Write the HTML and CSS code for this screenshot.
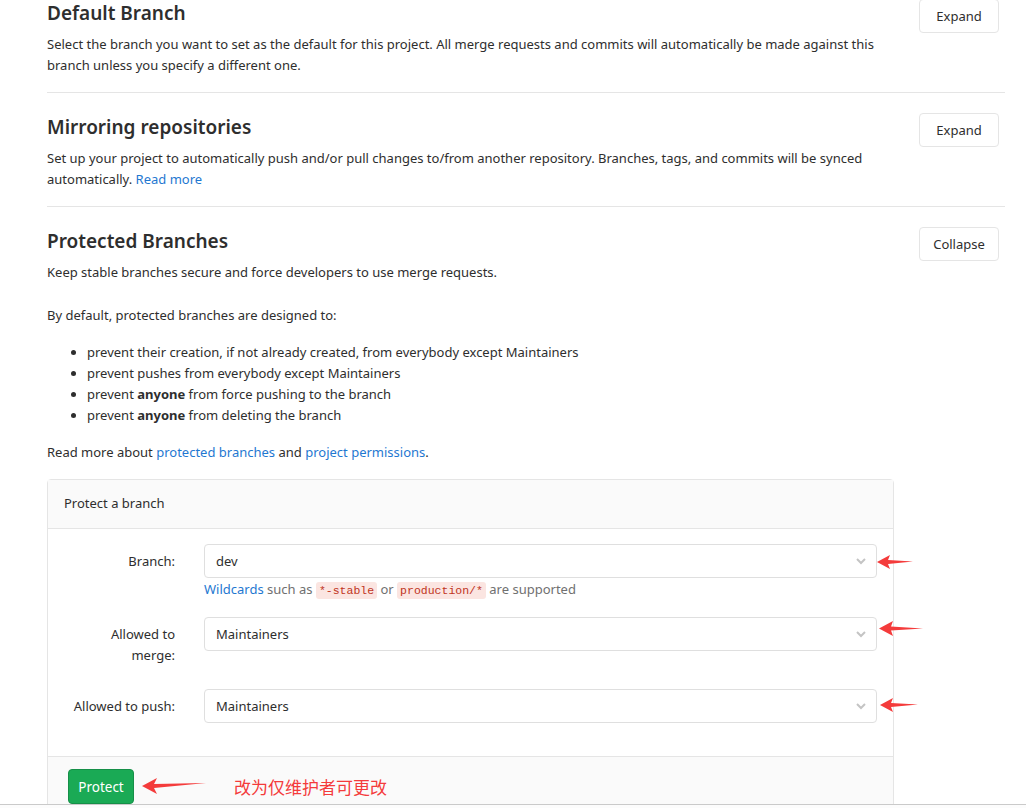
FILE: index.html
```html
<!DOCTYPE html>
<html lang="en">
<head>
<meta charset="utf-8">
<title>Repository Settings</title>
<link rel="stylesheet" href="styles.css">
</head>
<body>
<div class="page">
  <section class="settings-section">
    <h4 class="section-title">Default Branch</h4>
    <button class="btn">Expand</button>
    <p class="section-desc">Select the branch you want to set as the default for this project. All merge requests and commits will automatically be made against this branch unless you specify a different one.</p>
  </section>

  <section class="settings-section">
    <h4 class="section-title">Mirroring repositories</h4>
    <button class="btn">Expand</button>
    <p class="section-desc">Set up your project to automatically push and/or pull changes to/from another repository. Branches, tags, and commits will be synced automatically. <a href="#">Read more</a></p>
  </section>

  <section class="settings-section last">
    <h4 class="section-title">Protected Branches</h4>
    <button class="btn">Collapse</button>
    <p class="section-desc">Keep stable branches secure and force developers to use merge requests.</p>
    <div class="section-content">
      <p class="text-block">By default, protected branches are designed to:</p>
      <ul class="rules">
        <li>prevent their creation, if not already created, from everybody except Maintainers</li>
        <li>prevent pushes from everybody except Maintainers</li>
        <li>prevent <strong>anyone</strong> from force pushing to the branch</li>
        <li>prevent <strong>anyone</strong> from deleting the branch</li>
      </ul>
      <p class="text-block">Read more about <a href="#">protected branches</a> and <a href="#">project permissions</a>.</p>

      <div class="card">
        <div class="card-header">Protect a branch</div>
        <div class="card-body">
          <div class="form-row">
            <label class="form-label">Branch:</label>
            <div class="form-field">
              <div class="select"><span>dev</span><svg class="chev" viewBox="0 0 10 7" width="10" height="7"><path d="M1 1 L5 5 L9 1" fill="none" stroke="#c4c4c4" stroke-width="2"/></svg></div>
              <div class="help"><a href="#">Wildcards</a> such as <code>*-stable</code> or <code>production/*</code> are supported</div>
            </div>
          </div>
          <div class="form-row">
            <label class="form-label">Allowed to merge:</label>
            <div class="form-field">
              <div class="select"><span>Maintainers</span><svg class="chev" viewBox="0 0 10 7" width="10" height="7"><path d="M1 1 L5 5 L9 1" fill="none" stroke="#c4c4c4" stroke-width="2"/></svg></div>
            </div>
          </div>
          <div class="form-row">
            <label class="form-label">Allowed to push:</label>
            <div class="form-field">
              <div class="select"><span>Maintainers</span><svg class="chev" viewBox="0 0 10 7" width="10" height="7"><path d="M1 1 L5 5 L9 1" fill="none" stroke="#c4c4c4" stroke-width="2"/></svg></div>
            </div>
          </div>
        </div>
        <div class="card-footer">
          <button class="btn-success">Protect</button>
        </div>
      </div>
    </div>
  </section>
</div>

<svg class="arrow a1" viewBox="0 0 36 14" width="36" height="14"><polygon points="0,7 13,0 11,5 36,6.6 11,9 13,14" fill="#f43b3b"/></svg>
<svg class="arrow a2" viewBox="0 0 44 15" width="44" height="15"><polygon points="0,7.5 14,0 12,5.5 44,7.4 12,9.5 14,15" fill="#f43b3b"/></svg>
<svg class="arrow a3" viewBox="0 0 38 14" width="38" height="14"><polygon points="0,7 13,0 11,5 38,6.6 11,9 13,14" fill="#f43b3b"/></svg>
<svg class="arrow a4" viewBox="0 0 64 16" width="64" height="16"><polygon points="0,8 15,0 12,6 64,5 12,10 15,16" fill="#f43b3b"/></svg>
<div class="note">改为仅维护者可更改</div>
<div class="frame-edge"></div>
</body>
</html>
```
FILE: styles.css
```css
* { box-sizing: border-box; }
html, body { margin: 0; padding: 0; background: #fff; }
body {
  font-family: "Noto Sans", "Open Sans", sans-serif;
  font-size: 13px;
  line-height: 21px;
  color: #2e2e2e;
  overflow: hidden;
  height: 808px;
}
a { color: #1f78d1; text-decoration: none; }
.page {
  width: 958px;
  margin-left: 47px;
  margin-top: -21px;
}
.settings-section {
  display: grid;
  grid-template-columns: 1fr auto;
  align-items: start;
  padding-top: 20px;
  padding-bottom: 16px;
  border-bottom: 1px solid #e5e5e5;
}
.settings-section.last { border-bottom: none; }
.section-title {
  grid-column: 1;
  grid-row: 1;
  margin: 2px 0 0;
  font-size: 19px;
  line-height: 24px;
  font-weight: 600;
  color: #2e2e2e;
}
.btn {
  grid-column: 2;
  grid-row: 1 / span 2;
  margin-right: 6px;
  width: 80px;
  height: 34px;
  background: #fff;
  border: 1px solid #e5e5e5;
  border-radius: 4px;
  font-family: inherit;
  font-size: 13px;
  color: #2e2e2e;
  padding: 0;
}
.section-desc {
  grid-column: 1;
  grid-row: 2;
  margin: 9px 0 0;
  width: 850px;
}
.section-content {
  grid-column: 1 / span 2;
  grid-row: 3;
}
.text-block { margin: 22px 0 0; }
.rules {
  margin: 16px 0 16px;
  padding-left: 40px;
}
.rules + .text-block { margin-top: 0; }
.card {
  margin-top: 16px;
  width: 847px;
  border: 1px solid #e5e5e5;
  border-radius: 4px;
}
.card-header {
  height: 49px;
  padding: 13px 16px;
  background: #fafafa;
  border-bottom: 1px solid #e5e5e5;
}
.card-body {
  padding: 15px 16px 16px;
}
.form-row {
  display: flex;
  gap: 29px;
  margin-bottom: 16px;
}
.form-label {
  width: 111px;
  flex: none;
  text-align: right;
  padding: 7px 0 7px;
}
.form-field { flex: 1; }
.select {
  height: 34px;
  border: 1px solid #dfdfdf;
  border-radius: 4px;
  padding: 0 10px 0 11px;
  display: flex;
  align-items: center;
  justify-content: space-between;
}
.help { color: #707070; margin-top: 1px; }
code {
  font-family: "Liberation Mono", monospace;
  font-size: 11.5px;
  background: #fbe5e1;
  color: #c0341d;
  padding: 2px 3px;
  border-radius: 3px;
}
.card-footer {
  padding: 12px 20px 20px;
  background: #fafafa;
  border-top: 1px solid #e5e5e5;
}
.btn-success {
  width: 66px;
  height: 35px;
  background: #1aaa55;
  border: 1px solid #168f48;
  border-radius: 4px;
  color: #fff;
  font-family: inherit;
  font-size: 13.5px;
  padding: 0;
}
.arrow { position: absolute; }
.a1 { left: 877px; top: 555px; }
.a2 { left: 879px; top: 621px; }
.a3 { left: 880px; top: 698px; }
.a4 { left: 142px; top: 778px; }
.note {
  position: absolute;
  left: 234px;
  top: 775px;
  font-family: "Noto Sans CJK SC", sans-serif;
  font-size: 17px;
  line-height: 24px;
  color: #f43b3b;
}
.frame-edge {
  position: fixed;
  left: 0;
  right: 0;
  bottom: 0;
  height: 4px;
  border-top: 1px solid #cacaca;
  background: #fcfcfc;
}
```
